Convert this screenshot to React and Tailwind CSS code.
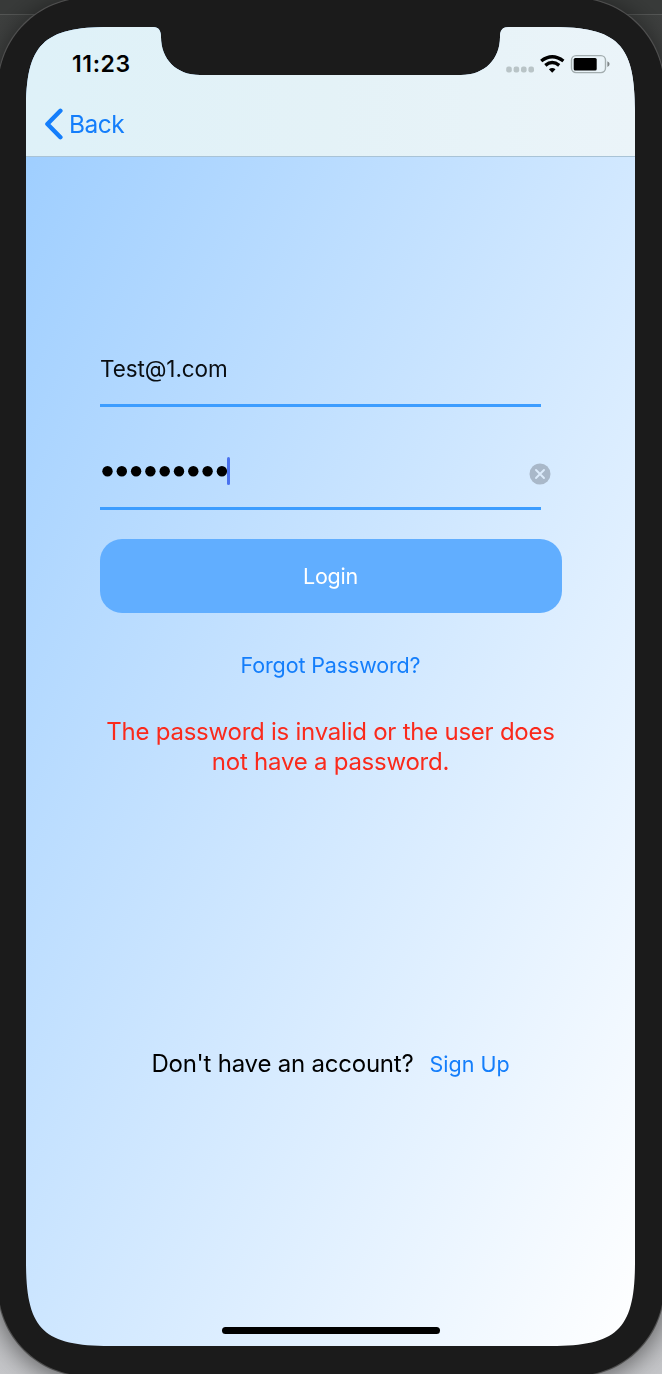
import React from "react";

function StatusIcons() {
  return (
    <svg className="-mt-[2px]" width="106" height="24" viewBox="0 0 106 24" aria-hidden="true">
      <g fill="#b9c4c7">
        <rect x="1.2" y="15.6" width="5.6" height="5.8" rx="2.2" />
        <rect x="8.6" y="15.6" width="5.6" height="5.8" rx="2.2" />
        <rect x="16" y="15.6" width="5.6" height="5.8" rx="2.2" />
        <rect x="23.4" y="15.6" width="5.6" height="5.8" rx="2.2" />
      </g>
      <g fill="none" stroke="#000" strokeWidth="3.4">
        <path d="M36.2 10 Q47.2 1.6 58.4 10" />
        <path d="M40.3 14.4 Q47.2 8.8 54.2 14.4" />
      </g>
      <path d="M43.9 18.2 Q47.2 15.8 50.5 18.2 L47.2 21.7 Z" fill="#000" />
      <rect x="66.5" y="4.6" width="34" height="17" rx="4.5" fill="none" stroke="#a3adaf" strokeWidth="1.4" />
      <rect x="68.7" y="6.9" width="23" height="12.6" rx="1.6" fill="#000" />
      <path d="M102.4 10.2 Q104.6 11.2 104.6 13.1 Q104.6 15 102.4 16 Z" fill="#7d8486" />
    </svg>
  );
}

function NavBar() {
  return (
    <header className="flex h-[130px] flex-col border-b border-[#a9c3d6] bg-linear-to-r from-[#def1f8] via-[#e4f2f7] to-[#ebf4f9]">
      <div className="flex h-[74px] items-center justify-between pr-[24px] pl-[46px]">
        <span className="text-[23px] leading-none font-semibold tracking-[0.6px] text-black">11:23</span>
        <StatusIcons />
      </div>
      <button className="flex items-center gap-[5px] pt-[7px] pl-[18px] text-[#147efb]">
        <svg width="20" height="32" viewBox="0 0 20 32" fill="none" stroke="currentColor" strokeWidth="4.4" strokeLinecap="round" strokeLinejoin="round" aria-hidden="true">
          <path d="M16.4 2.8 L3.4 16 L16.4 29.2" />
        </svg>
        <span className="text-[24.5px] leading-8 tracking-[-0.5px]">Back</span>
      </button>
    </header>
  );
}

function LoginForm() {
  return (
    <main className="flex flex-col pl-[73.5px]">
      <div className="mt-[189px] flex h-[61px] w-[441px] items-center border-b-3 border-[#3d9dff] pb-[11px] text-[22.5px] leading-none tracking-[-0.1px] text-[#0a0e12]">
        <span className="pl-[0.5px]">Test@1.com</span>
      </div>
      <div className="flex h-[103px] w-[441px] items-end border-b-3 border-[#3d9dff]">
        <div className="mb-[22px] flex h-[28px] w-[451.5px] shrink-0 items-center justify-between">
          <div className="flex items-center">
            <svg width="128" height="12" viewBox="0 0 128 12" aria-hidden="true">
              {[0, 1, 2, 3, 4, 5, 6, 7, 8].map((i) => (
                <circle key={i} cx={7.5 + i * 14.3} cy="6.3" r="5.2" />
              ))}
            </svg>
            <span className="-ml-px h-[28px] w-[3px] rounded-full bg-[#4a72ef]" />
          </div>
          <svg className="mt-[5px]" width="22" height="22" viewBox="0 0 22 22" aria-hidden="true">
            <circle cx="11" cy="11" r="10.5" fill="#a9b8c9" />
            <path d="M7 7 L15 15 M15 7 L7 15" stroke="#dcebfb" strokeWidth="1.9" strokeLinecap="round" />
          </svg>
        </div>
      </div>
      <button className="mt-[29px] h-[74px] w-[462px] rounded-[22px] bg-[#61aeff] text-[21.5px] tracking-[-0.2px] text-white">
        Login
      </button>
      <a className="mt-[38px] w-[462px] text-center text-[21.5px] leading-[28px] tracking-[-0.14px] text-[#147efb]">Forgot Password?</a>
      <p className="mt-[38px] w-[462px] text-center text-[24px] leading-[29.5px] tracking-[-0.24px] text-[#fa2a1c]">
        <span className="block whitespace-nowrap">The password is invalid or the user does</span>
        <span className="block whitespace-nowrap">not have a password.</span>
      </p>
      <div className="mt-[273px] flex w-[462px] items-center justify-center gap-[16px] whitespace-nowrap">
        <span className="text-[24px] leading-[30px] tracking-[-0.22px] text-black">Don't have an account?</span>
        <a className="text-[21.5px] leading-[30px] text-[#147efb]">Sign Up</a>
      </div>
    </main>
  );
}

export default function App() {
  return (
    <div className="h-[1374px] w-[662px] overflow-hidden bg-linear-to-b from-[#3d3f3e] from-0% via-[#777777] via-50% to-[#c6c7ca] font-['Inter',sans-serif]">
      <div className="h-[15px] border-b border-[#555756] bg-[#393b3a]" />
      <div className="-mt-[18px] -ml-[3px] h-[1380px] w-[668px] drop-shadow-[0_4px_14px_rgba(0,0,0,0.55)]">
        <div className="h-[1380px] w-[668px] bg-[#505050] [clip-path:path('M0_92C0_40_40_0_92_0H576C628_0_668_40_668_92V1288C668_1340_628_1380_576_1380H92C40_1380_0_1340_0_1288Z')]">
          <div className="flex h-[1380px] w-[668px] bg-[#1b1b1b] pt-[30px] pl-[29px] [clip-path:path('M1_92C1_41_41_1_92_1H576C627_1_667_41_667_92V1288C667_1339_627_1379_576_1379H92C41_1379_1_1339_1_1288Z')]">
            <div className="flex h-[1319px] w-[609px] flex-col bg-linear-to-br from-[#9accff] to-white [clip-path:path('M0_84C0_17_17_0_84_0H127C133_0_135_4_135_10C135_32_150_48_174_48H435C459_48_474_32_474_10C474_4_476_0_483_0H525C592_0_609_17_609_84V1235C609_1302_592_1319_525_1319H84C17_1319_0_1302_0_1235Z')]">
              <NavBar />
              <LoginForm />
              <div className="mt-auto mb-[12px] h-[7px] w-[218px] self-center rounded-full bg-black" />
            </div>
          </div>
        </div>
      </div>
    </div>
  );
}
